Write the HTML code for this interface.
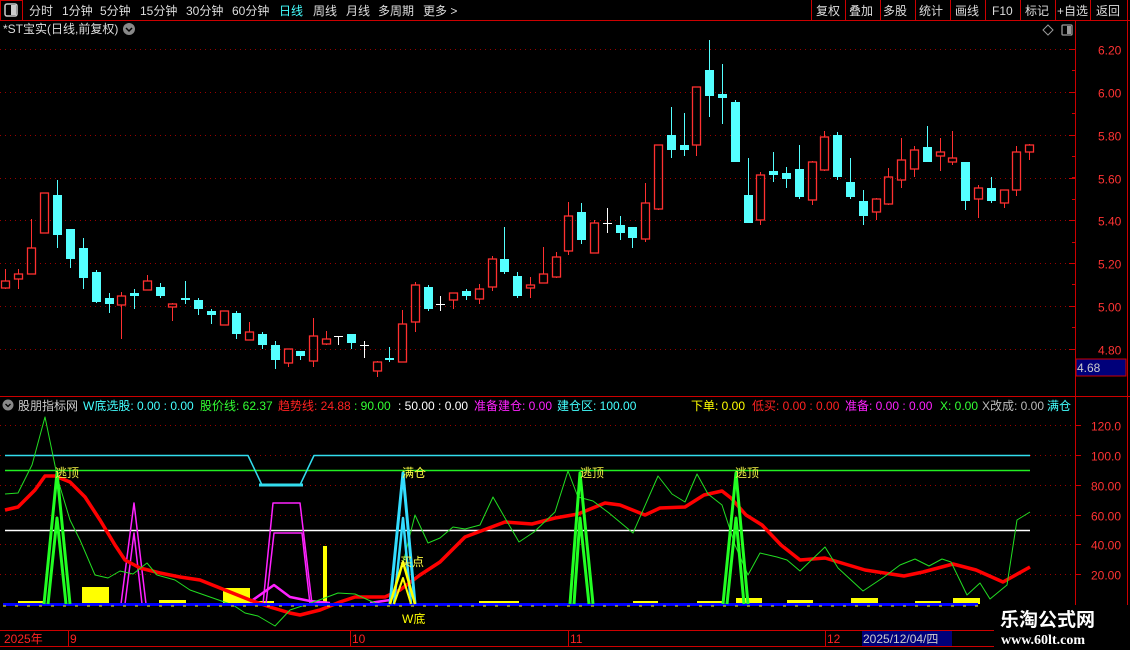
<!DOCTYPE html>
<html><head><meta charset="utf-8"><style>
html,body{margin:0;padding:0;background:#000;width:1130px;height:650px;overflow:hidden;font-family:"Liberation Sans","Noto Sans CJK SC",sans-serif;}
svg{position:absolute;left:0;top:0}
text{font-family:"Liberation Sans","Noto Sans CJK SC",sans-serif;font-size:12px}
</style></head><body>
<svg id="s" width="1130" height="650" xmlns="http://www.w3.org/2000/svg">
<rect width="1130" height="650" fill="#000"/>
<!-- top bar -->
<line x1="0" y1="20.5" x2="1130" y2="20.5" stroke="#c00" stroke-width="1"/>
<rect x="0.5" y="0.5" width="22" height="20" fill="none" stroke="#c00"/>
<rect x="5" y="4" width="12" height="12" rx="2" fill="none" stroke="#ccc" stroke-width="1.5"/>
<rect x="11" y="5" width="5" height="10" fill="#ccc"/>
<g fill="#ddd">
<text x="29" y="15">分时</text><text x="62" y="15">1分钟</text><text x="100" y="15">5分钟</text><text x="140" y="15">15分钟</text><text x="186" y="15">30分钟</text><text x="232" y="15">60分钟</text>
<text x="279" y="15" fill="#4ff">日线</text><text x="313" y="15">周线</text><text x="346" y="15">月线</text><text x="378" y="15">多周期</text><text x="423" y="15">更多 &gt;</text>
<text x="816" y="15">复权</text><text x="849" y="15">叠加</text><text x="883" y="15">多股</text><text x="919" y="15">统计</text><text x="955" y="15">画线</text><text x="992" y="15">F10</text><text x="1025" y="15">标记</text><text x="1057" y="15">+自选</text><text x="1096" y="15">返回</text>
</g>
<g stroke="#c00"><line x1="811.5" y1="0" x2="811.5" y2="20"/><line x1="845.5" y1="0" x2="845.5" y2="20"/><line x1="880.5" y1="0" x2="880.5" y2="20"/><line x1="915.5" y1="0" x2="915.5" y2="20"/><line x1="950.5" y1="0" x2="950.5" y2="20"/><line x1="985.5" y1="0" x2="985.5" y2="20"/><line x1="1020.5" y1="0" x2="1020.5" y2="20"/><line x1="1055.5" y1="0" x2="1055.5" y2="20"/><line x1="1090.5" y1="0" x2="1090.5" y2="20"/><line x1="1127.5" y1="0" x2="1127.5" y2="650"/></g>
<text x="3" y="33" fill="#ddd">*ST宝实(日线,前复权)</text>
<circle cx="129" cy="29" r="6" fill="#888"/><path d="M126 28 L129 31 L132 28" stroke="#000" stroke-width="1.5" fill="none"/>
<path d="M1048 25 L1053 30 L1048 35 L1043 30Z" fill="none" stroke="#999"/>
<rect x="1062" y="25" width="10" height="10" rx="1" fill="none" stroke="#999" stroke-width="1.3"/><rect x="1067" y="26" width="4" height="8" fill="#999"/>
<!-- axis -->
<line x1="1075.5" y1="21" x2="1075.5" y2="630" stroke="#c00"/>
<line x1="0" y1="396.5" x2="1130" y2="396.5" stroke="#c00"/>
<g id="grid"></g>
<g id="candles"></g>
<rect x="1076" y="359" width="50" height="17" fill="#00007a" stroke="#c00"/>
<text x="1077" y="372" fill="#ccc">4.68</text>
<!-- indicator header -->
<circle cx="8" cy="405" r="5.5" fill="#888"/><path d="M5.5 404 L8 406.5 L10.5 404" stroke="#000" stroke-width="1.3" fill="none"/>
<text x="18" y="410" fill="#ccc">股朋指标网</text>
<text x="83" y="410" fill="#4ff">W底选股: 0.00 : 0.00</text>
<text x="200" y="410" fill="#3f3">股价线: 62.37</text>
<text x="278" y="410" fill="#f22">趋势线: 24.88</text>
<text x="354" y="410" fill="#3f3">: 90.00</text>
<text x="398" y="410" fill="#fff">: 50.00 : 0.00</text>
<text x="474" y="410" fill="#f2f">准备建仓: 0.00</text>
<text x="557" y="410" fill="#4ff">建仓区: 100.00</text>
<text x="691" y="410" fill="#ff0">下单: 0.00</text>
<text x="752" y="410" fill="#f22">低买: 0.00 : 0.00</text>
<text x="845" y="410" fill="#f2f">准备: 0.00 : 0.00</text>
<text x="940" y="410" fill="#3f3">X: 0.00</text>
<text x="982" y="410" fill="#bbb">X改成: 0.00</text>
<rect x="1045" y="398" width="30" height="16" fill="#000"/>
<text x="1047" y="410" fill="#4ff">满仓</text>
<rect x="1076" y="397" width="51" height="233" fill="#000"/>
<line x1="1075.5" y1="397" x2="1075.5" y2="630" stroke="#c00"/>
<g id="ind"></g>
<!-- date axis -->
<line x1="0" y1="630.5" x2="1130" y2="630.5" stroke="#c00"/>
<line x1="0" y1="646.5" x2="1130" y2="646.5" stroke="#c00"/>
<g stroke="#c00"><line x1="68.5" y1="630" x2="68.5" y2="646"/><line x1="350.5" y1="630" x2="350.5" y2="646"/><line x1="568.5" y1="630" x2="568.5" y2="646"/><line x1="825.5" y1="630" x2="825.5" y2="646"/></g>
<g fill="#f22"><text x="4" y="643">2025年</text><text x="70" y="643">9</text><text x="352" y="643">10</text><text x="570" y="643">11</text><text x="827" y="643">12</text></g>
<rect x="862" y="631" width="90" height="15" fill="#00007a"/>
<text x="863" y="643" fill="#ccc">2025/12/04/四</text>
<rect x="994" y="605" width="136" height="45" fill="#000"/>
<text x="1000" y="626" fill="#fff" style="font-size:19px;font-weight:bold">乐淘公式网</text>
<text x="1001" y="644" fill="#fff" style="font-family:'Liberation Serif',serif;font-size:14px;font-weight:bold">www.60lt.com</text>
</svg>
<script>
var NS="http://www.w3.org/2000/svg";
function el(p,t,a){var e=document.createElementNS(NS,t);for(var k in a)e.setAttribute(k,a[k]);document.getElementById(p).appendChild(e);return e;}
// price grid
[6.2,6.0,5.8,5.6,5.4,5.2,5.0,4.8].forEach(function(p){var y=Math.round(49+(6.2-p)*214.3)+0.5;
el("grid","line",{x1:0,y1:y,x2:1075,y2:y,stroke:"#900","stroke-dasharray":"1 4"});
el("grid","line",{x1:1069,y1:y,x2:1075,y2:y,stroke:"#c00"});
var t=el("grid","text",{x:1098,y:y+5,fill:"#f33"});t.textContent=p.toFixed(2);});
for(var i=0;i<15;i++){var y=Math.round(49+i*21.4)+0.5;el("grid","line",{x1:1072,y1:y,x2:1075,y2:y,stroke:"#c00"});}
var C=[[5,281,288,269,289,'r'],[18,274,279,269,289,'r'],[31,248,274,219,274,'r'],[44,193,233,193,233,'r'],[57,195,235,180,248,'c'],[70,229,259,229,268,'c'],[83,248,278,238,289,'c'],[96,272,302,270,303,'c'],[109,298,304,293,313,'c'],[121,296,305,292,339,'r'],[134,293,296,289,309,'c'],[147,281,290,275,290,'r'],[160,287,296,283,298,'c'],[172,304,307,303,321,'r'],[185,298,300,281,304,'c'],[198,300,309,298,315,'c'],[211,311,315,309,324,'c'],[224,311,325,311,325,'r'],[236,313,334,311,339,'c'],[249,332,340,322,340,'r'],[262,334,345,332,349,'c'],[275,345,360,341,369,'c'],[288,349,363,349,367,'r'],[300,351,356,351,360,'c'],[313,336,361,318,367,'r'],[326,339,344,331,345,'r'],[338,336,336,336,345,'w'],[351,334,343,334,349,'c'],[364,345,345,341,358,'w'],[377,362,371,361,377,'r'],[389,358,360,347,362,'c'],[402,324,362,310,362,'r'],[415,285,322,282,332,'r'],[428,287,309,285,311,'c'],[440,304,304,296,311,'w'],[453,293,300,293,309,'r'],[466,291,296,289,300,'c'],[479,289,299,284,304,'r'],[492,259,287,256,291,'r'],[504,259,272,227,274,'c'],[517,276,296,272,298,'c'],[530,285,288,277,298,'r'],[543,274,283,247,283,'r'],[556,257,277,252,278,'r'],[568,216,251,202,255,'r'],[581,212,240,203,244,'c'],[594,223,253,220,253,'r'],[607,223,223,208,233,'w'],[620,225,233,216,240,'c'],[632,227,238,227,248,'c'],[645,203,239,183,242,'r'],[658,145,209,145,210,'r'],[671,135,150,107,158,'c'],[684,145,150,113,156,'c'],[696,87,145,87,156,'r'],[709,70,96,40,117,'c'],[722,94,98,64,124,'c'],[735,102,162,100,162,'c'],[748,195,223,158,223,'c'],[760,175,220,172,225,'r'],[773,171,175,152,182,'c'],[786,173,179,167,188,'c'],[799,169,197,145,199,'c'],[812,162,200,161,205,'r'],[824,137,170,131,171,'r'],[837,135,177,132,180,'c'],[850,182,197,158,199,'c'],[863,201,216,190,225,'c'],[876,199,212,198,220,'r'],[888,177,204,168,205,'r'],[901,160,180,138,188,'r'],[914,150,169,146,177,'r'],[927,147,162,126,162,'c'],[940,152,156,138,171,'r'],[952,158,162,131,165,'r'],[965,162,201,162,210,'c'],[978,188,199,185,218,'r'],[991,188,201,177,203,'c'],[1004,190,203,190,208,'r'],[1016,152,190,146,196,'r'],[1029,145,152,144,160,'r']];
C.forEach(function(c){var x=c[0],t=c[1],b=c[2],h=c[3],l=c[4],k=c[5];
if(k=='c'){el("candles","line",{x1:x+.5,y1:h,x2:x+.5,y2:l,stroke:"#54ffff","stroke-width":1});el("candles","rect",{x:x-4,y:t,width:9,height:Math.max(b-t,2),fill:"#54ffff"});}
else if(k=='r'){el("candles","line",{x1:x+.5,y1:h,x2:x+.5,y2:t,stroke:"#ff3030","stroke-width":1});el("candles","line",{x1:x+.5,y1:b,x2:x+.5,y2:l,stroke:"#ff3030","stroke-width":1});el("candles","rect",{x:x-3.5,y:t,width:8,height:Math.max(b-t,2),fill:"none",stroke:"#ff3030","stroke-width":1.3});}
else{el("candles","line",{x1:x+.5,y1:h,x2:x+.5,y2:l,stroke:"#fff"});el("candles","line",{x1:x-4,y1:t+.5,x2:x+5,y2:t+.5,stroke:"#fff"});}});
// indicator
[120,100,80,60,40,20].forEach(function(v){var y=Math.round(604-v*1.49)+0.5;
el("ind","line",{x1:0,y1:y,x2:1075,y2:y,stroke:"#900","stroke-dasharray":"1 4"});
el("ind","line",{x1:1075,y1:y,x2:1081,y2:y,stroke:"#c00"});
var t=el("ind","text",{x:1091,y:y+5,fill:"#f33"});t.textContent=v==120?"120.0":v==100?"100.0":v.toFixed(2);});
function pl(pts,st,w){el("ind","polyline",{points:pts,fill:"none",stroke:st,"stroke-width":w,"stroke-linejoin":"round"});}
function R(a,b,c,d,f){el("ind","rect",{x:a,y:b,width:c,height:d,fill:f});}
pl("5,530.5 1030,530.5","#fff",1.5);
pl("5,470.5 1030,470.5","#2e2",1.5);
pl("5,455.5 248,455.5 262,485 300,485 314,455.5 1030,455.5","#3de",1.5);
pl("259,485 303,485","#3de",3);
// yellow blocks
R(82,587,27,17,"#ff0");R(223,588,27,16,"#ff0");R(18,601,27,3,"#ff0");R(159,600,27,4,"#ff0");R(323,546,4,58,"#ff0");
R(479,601,40,3,"#ff0");R(633,601,25,3,"#ff0");R(697,601,26,3,"#ff0");R(736,598,26,6,"#ff0");R(787,600,26,4,"#ff0");R(851,598,27,6,"#ff0");R(915,601,26,3,"#ff0");R(953,598,27,6,"#ff0");R(250,601,24,3,"#ff0");
// magenta
pl("121,604 134,503 146,604","#f2f",1.5);pl("125,604 134,533 142,604","#f2f",1.5);
pl("263,604 273,503 300,503 312,604","#f2f",1.5);pl("266,604 274,533 302,533 310,604","#f2f",1.5);
pl("250,602 274,585 290,597 310,601 330,603","#f2f",2.5);
pl("370,603 390,600","#f2f",2.5);
// red trend
pl("5,510 18,507 35,490 45,476 55,476 70,482 85,497 100,520 115,545 125,560 140,568 160,573 180,577 200,580 225,590 250,600 270,607 290,613 300,615 320,610 340,602 355,597 385,597 400,590 420,575 440,562 465,537 505,522 532,524 555,518 578,514 605,503 620,505 645,515 660,508 685,507 704,495 722,491 731,498 746,515 762,525 781,545 800,560 825,558 865,570 904,576 923,572 953,564 976,570 1003,582 1030,567","#f00",3.5);
// thin green
pl("5,494 18,493 32,465 45,417 58,480 70,520 80,540 95,575 108,578 120,571 133,574 147,563 157,575 175,580 190,590 210,597 233,605 245,613 258,616 275,626 290,610 305,605 322,599 338,593 355,594 375,603 390,605 400,575 415,515 428,543 440,538 453,527 465,529 480,525 493,497 505,518 519,542 534,532 555,512 568,471 578,497 593,501 609,513 633,533 658,476 672,494 685,502 697,474 708,494 722,505 735,545 748,575 760,553 777,557 787,560 800,571 825,547 838,568 863,591 884,577 900,565 915,559 929,566 942,559 951,562 967,595 980,583 990,599 1007,585 1017,520 1030,512","#2d2",1);
// baseline
pl("3,604.5 978,604.5","#00f",3);
el("ind","line",{x1:3,y1:606,x2:978,y2:606,stroke:"#ff0","stroke-dasharray":"3 9"});
// green spikes
[[44,57,70],[570,580,593],[723,736,748]].forEach(function(s){pl(s[0]+",604 "+s[1]+",473 "+s[2]+",604","#2f2",3);pl((s[0]+4)+",604 "+s[1]+",518 "+(s[2]-4)+",604","#2f2",3);});
// cyan spike + yellow
pl("390,604 403,473 415,604","#3df",3);pl("394,604 403,518 411,604","#3df",2.5);
pl("390,604 403,562 415,604","#ff0",2.5);pl("394,604 403,578 411,604","#ff0",2);
function T(x,y,s,c){var t=el("ind","text",{x:x,y:y,fill:c});t.textContent=s;}
T(55,477,"逃顶","#ee4");T(580,477,"逃顶","#ee4");T(735,477,"逃顶","#ee4");T(402,477,"满仓","#ff4");T(400,566,"买点","#ff4");T(402,623,"W底","#ff0");
</script>
</body></html>
